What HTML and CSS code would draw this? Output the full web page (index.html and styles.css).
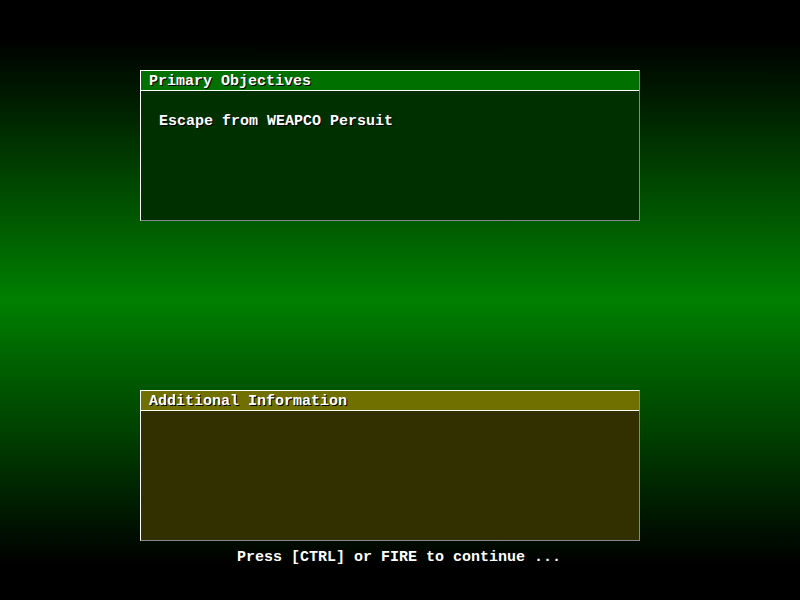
FILE: index.html
```html
<!DOCTYPE html>
<html>
<head>
<meta charset="utf-8">
<link rel="stylesheet" href="styles.css">
</head>
<body>
<div class="screen">
  <section class="panel panel-green">
    <div class="panel-title">Primary Objectives</div>
    <div class="panel-body">
      <p class="line">Escape from WEAPCO Persuit</p>
    </div>
  </section>
  <section class="panel panel-olive">
    <div class="panel-title">Additional Information</div>
    <div class="panel-body"></div>
  </section>
  <div class="footer">Press [CTRL] or FIRE to continue ...</div>
</div>
</body>
</html>
```
FILE: styles.css
```css
html, body {
  margin: 0;
  padding: 0;
  width: 800px;
  height: 600px;
  overflow: hidden;
}
body {
  background: linear-gradient(to bottom, #000 0px, #000 40px, #008000 300px, #000 565px, #000 600px);
  font-family: "Liberation Mono", "DejaVu Sans Mono", monospace;
  font-weight: bold;
  font-size: 15px;
  color: #fff;
}
.screen {
  display: flex;
  flex-direction: column;
  padding-top: 70px;
}
.panel {
  width: 500px;
  margin-left: 140px;
  box-sizing: border-box;
  border-top: 1px solid #fff;
  border-left: 1px solid #fff;
  border-right: 1px solid #888;
  border-bottom: 1px solid #888;
  display: flex;
  flex-direction: column;
}
.panel + .panel {
  margin-top: 169px;
}
.panel-title {
  height: 19px;
  line-height: 21px;
  padding-left: 8px;
  border-bottom: 1px solid #fff;
  text-shadow: 1px 1px 0 #000;
  white-space: pre;
}
.panel-body {
  height: 129px;
}
.panel-green .panel-title { background: #007000; }
.panel-green .panel-body { background: #003000; }
.panel-olive .panel-title { background: #707000; }
.panel-olive .panel-body { background: #333000; }
.line {
  margin: 0;
  padding: 21px 0 0 18px;
  line-height: 19px;
  text-shadow: 1px 1px 0 #000;
}
.footer {
  margin-top: 7px;
  line-height: 19px;
  text-align: center;
  padding-right: 2px;
}
```
